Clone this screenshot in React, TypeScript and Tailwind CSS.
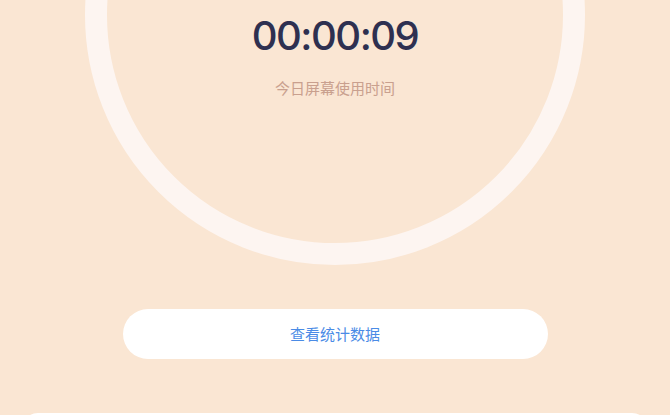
export default function App() {
  return (
    <div
      className="h-[415px] w-full overflow-hidden bg-[#fae6d3]"
      style={{ fontFamily: '"Liberation Sans", "Noto Sans CJK SC", sans-serif' }}
    >
      {/* usage ring */}
      <div className="mx-auto -mt-[235px] flex h-[500px] w-[500px] flex-col items-center rounded-full border-[22px] border-[#fdf5f1] pt-[229px]">
        <div className="font-['Inter',sans-serif] text-[40px] font-medium leading-none tracking-[-1.5px] text-[#2e3050]">00:00:09</div>
        <div className="mt-[24px] font-['Noto_Sans_CJK_SC',sans-serif] text-[15px] leading-none text-[#c9a08e]">
          今日屏幕使用时间
        </div>
      </div>

      <div className="mt-[44px] flex justify-center">
        <button className="flex h-[50px] w-[425px] items-center justify-center rounded-full bg-white font-['Noto_Sans_CJK_SC',sans-serif] text-[15px] text-[#4a8be6]">
          查看统计数据
        </button>
      </div>

      <div className="mx-[22px] mt-[54px] h-[40px] rounded-t-[16px] bg-white" />
    </div>
  );
}
